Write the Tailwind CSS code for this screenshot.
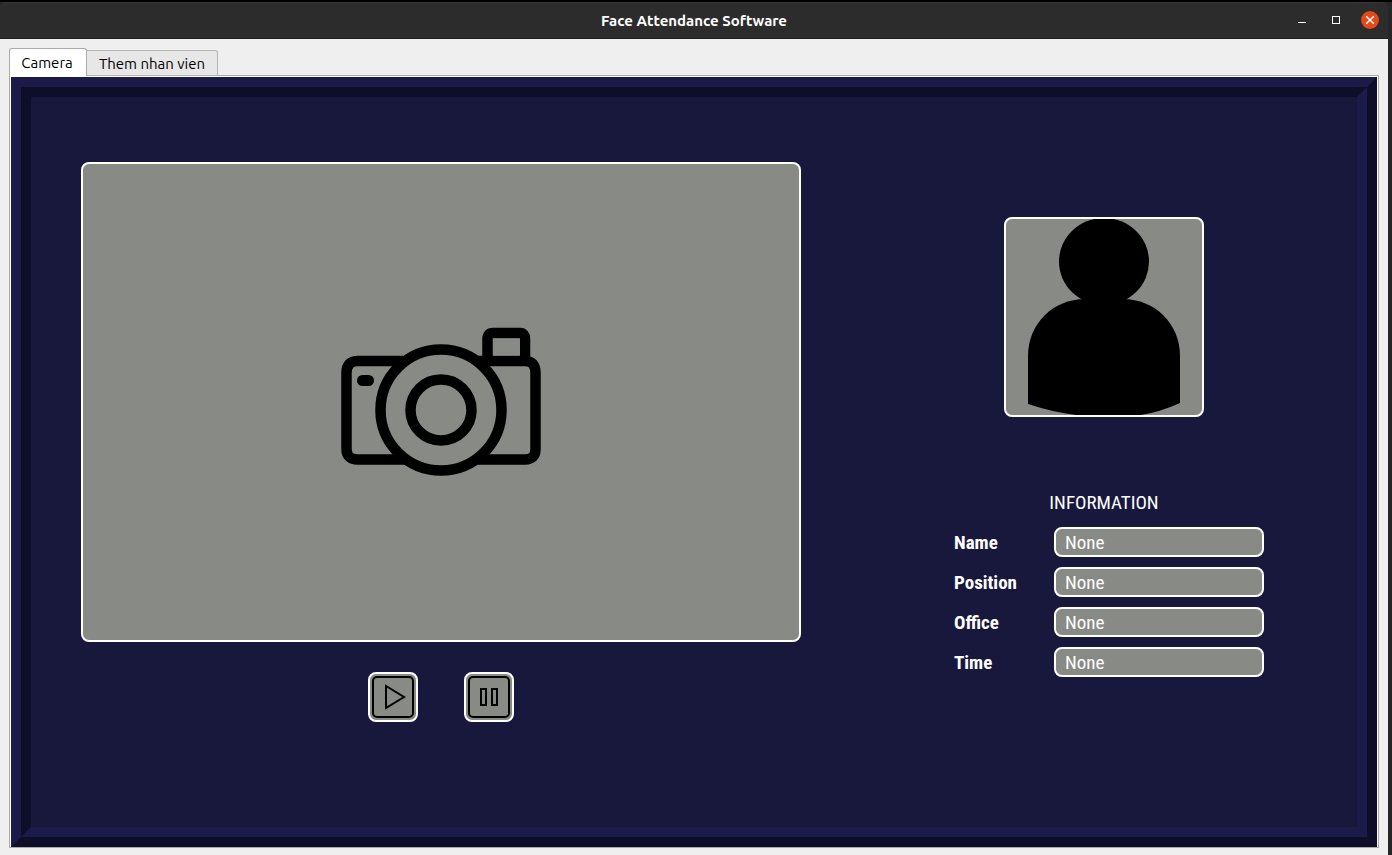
<!DOCTYPE html>
<html lang="en">
<head>
<meta charset="utf-8">
<meta name="viewport" content="width=device-width, initial-scale=1">
<title>Face Attendance Software</title>
<script src="https://cdn.jsdelivr.net/npm/@tailwindcss/browser@4"></script>
</head>
<body class="flex min-h-screen flex-col bg-[#262626] font-['Ubuntu','Noto_Sans',sans-serif]">
<div class="flex grow flex-col border-t-2 border-black pr-1">
  <header class="grid h-[37px] grid-cols-[1fr_auto_1fr] items-center rounded-t-md border-t border-b border-t-[#383838] border-b-[#1e1e1e] bg-[#2c2c2c] px-[9px]">
    <h1 class="col-start-2 pt-0.5 text-[15px] font-bold text-white">Face Attendance Software</h1>
    <div class="flex items-center justify-end gap-4 pb-px">
      <button type="button" aria-label="Minimize" class="flex size-[18px] items-center justify-center text-white">
        <svg class="size-[18px]" viewBox="0 0 18 18" fill="none" stroke="currentColor" shape-rendering="crispEdges"><path d="M5 11.500h8"/></svg>
      </button>
      <button type="button" aria-label="Maximize" class="flex size-[18px] items-center justify-center text-white">
        <svg class="size-[18px]" viewBox="0 0 18 18" fill="none" stroke="currentColor" shape-rendering="crispEdges"><path d="M5.500 5.500h7v7h-7z"/></svg>
      </button>
      <button type="button" aria-label="Close" class="flex size-[18px] items-center justify-center rounded-full bg-[#e2491b] text-white">
        <svg class="size-[18px]" viewBox="0 0 18 18" fill="none" stroke="currentColor" stroke-width="1.4"><path d="M5.200 5.200l7.600 7.600M12.800 5.200l-7.600 7.600"/></svg>
      </button>
    </div>
  </header>

  <main class="flex grow flex-col bg-[#efefef] px-[9px] pt-[9px] pb-[7px]">
    <div role="tablist" class="z-10 -mb-px flex items-end">
      <button type="button" role="tab" aria-selected="true" class="flex h-7 w-[78px] items-center justify-center rounded-t-[3px] border border-b-0 border-[#ababab] bg-white pt-0.5 pr-0.5 text-[15px] text-black">Camera</button>
      <button type="button" role="tab" aria-selected="false" class="flex h-[26px] w-[131px] items-center justify-center rounded-tr-[3px] border border-l-0 border-[#b4b4b4] bg-[#e7e7e7] pt-0.5 text-[15px] text-black">Them nhan vien</button>
    </div>
    <div role="tabpanel" class="flex grow flex-col border border-[#ababab] bg-white pt-px pr-px pl-px">
      <div class="flex grow flex-col border-10 border-t-[#1c1a48] border-r-[#0f0e29] border-b-[#0f0e29] border-l-[#1c1a48] bg-[#18183d]">
        <div class="flex grow items-start justify-between border-10 border-t-[#0f0e29] border-r-[#1c1a48] border-b-[#1c1a48] border-l-[#0f0e29] pr-[93px] pl-[50px]">
          <section aria-label="Camera" class="flex w-[720px] flex-col items-center gap-[30px] pt-[65px]">
            <div class="flex h-[480px] w-full items-center justify-center rounded-lg border-2 border-white bg-[#888a85]">
              <svg class="h-[200px] w-[200px]" viewBox="0 0 200 200" fill="none" stroke="#000" stroke-width="10.5">
                <path d="M62 59H17Q5.500 59 5.500 71V147Q5.500 157.500 17 157.500H64M136 157.500H184Q194.500 157.500 194.500 147V71Q194.500 59 184 59H136"/>
                <path d="M146.500 62V37Q146.500 31 152 31H179Q184 31 184 37V60"/>
                <path d="M152 36.500h27v17h-27z" fill="#888a85" stroke="none"/>
                <circle cx="100" cy="108" r="60.500"/>
                <circle cx="100" cy="108" r="30.500"/>
                <rect x="16" y="73" width="17" height="11" rx="5.500" fill="#000" stroke="none"/>
              </svg>
            </div>
            <div class="flex gap-[46px]">
              <button type="button" aria-label="Play" class="flex size-[50px] items-center justify-center rounded-lg border-2 border-white bg-[#888a85]">
                <svg class="size-[46px]" viewBox="0 0 46 46" fill="none" stroke="#000" stroke-width="2"><rect x="3" y="3" width="40" height="40" rx="4"/><path d="M16 12V34L34 23Z"/></svg>
              </button>
              <button type="button" aria-label="Pause" class="flex size-[50px] items-center justify-center rounded-lg border-2 border-white bg-[#888a85]">
                <svg class="size-[46px]" viewBox="0 0 46 46" fill="none" stroke="#000" stroke-width="2"><rect x="3" y="3" width="40" height="40" rx="4"/><path d="M15 15h5v16h-5zM26 15h5v16h-5z"/></svg>
              </button>
            </div>
          </section>

          <section aria-label="Employee" class="flex w-[310px] flex-col pt-[120px] font-['Ubuntu_Condensed','Roboto_Condensed','Open_Sans_Condensed','Liberation_Sans',sans-serif] text-[19px] text-white">
            <div class="flex w-[300px] flex-col items-center">
              <div class="size-[200px] overflow-hidden rounded-lg border-2 border-white bg-[#888a85]">
                <svg class="size-[196px]" viewBox="0 0 196 196" fill="#000"><ellipse cx="98" cy="42.500" rx="45" ry="43.500"/><path d="M22 185V137C22 105 47 80 79 80H117C149 80 174 105 174 137V184Q154 193 135 196H70Q46 193 22 185Z"/></svg>
              </div>
              <h2 class="mt-[71px] leading-[30px]">INFORMATION</h2>
            </div>
            <form class="mt-[9px] grid auto-rows-[30px] grid-cols-[100px_1fr] gap-y-2.5 leading-8">
              <label for="name" class="font-bold">Name</label>
              <input id="name" value="None" readonly class="h-[30px] w-full rounded-lg border-2 border-white bg-[#888a85] px-[9px] pt-0.5">
              <label for="position" class="font-bold">Position</label>
              <input id="position" value="None" readonly class="h-[30px] w-full rounded-lg border-2 border-white bg-[#888a85] px-[9px] pt-0.5">
              <label for="office" class="font-bold">Office</label>
              <input id="office" value="None" readonly class="h-[30px] w-full rounded-lg border-2 border-white bg-[#888a85] px-[9px] pt-0.5">
              <label for="time" class="font-bold">Time</label>
              <input id="time" value="None" readonly class="h-[30px] w-full rounded-lg border-2 border-white bg-[#888a85] px-[9px] pt-0.5">
            </form>
          </section>
        </div>
      </div>
    </div>
  </main>
</div>
</body>
</html>
